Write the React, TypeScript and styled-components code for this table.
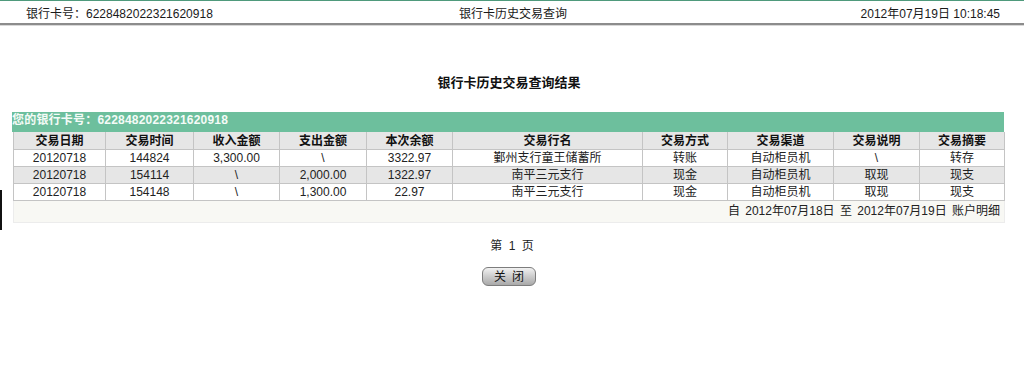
import React from "react";
import styled, { createGlobalStyle } from "styled-components";

const Global = createGlobalStyle`
  html, body { margin: 0; padding: 0; background: #fff; }
  body {
    font-family: "Liberation Sans", Arial, "Noto Sans CJK SC", sans-serif;
    font-size: 12px;
    color: #111;
  }
`;

const Page = styled.div`
  position: relative;
  width: 1024px;
  height: 375px;
  overflow: hidden;
  border-top: 1px solid #4f9a7c;
  box-sizing: border-box;
`;

const TopBar = styled.div`
  display: grid;
  grid-template-columns: 1fr auto 1fr;
  align-items: center;
  height: 22px;
  padding: 0 24px 0 26px;
  border-bottom: 2px solid #8c8c8c;
  box-shadow: 0 1px 0 #d8d8d8;
  font-size: 12px;
  color: #1a1a1a;
`;

const TopCell = styled.div<{ $align: "left" | "center" | "right" }>`
  text-align: ${(p) => p.$align};
  white-space: nowrap;
`;

const Title = styled.h1`
  margin: 48px 0 0;
  height: 20px;
  line-height: 20px;
  text-align: center;
  font-size: 13px;
  font-weight: bold;
  color: #111;
  padding-right: 6px;
`;

const TableWrap = styled.div`
  margin: 19px 20px 0 12px;
  width: 992px;
`;

const CardBar = styled.div`
  height: 20px;
  line-height: 16px;
  background: #6dbf9d;
  color: #f4fbf7;
  font-weight: bold;
  font-size: 12px;
  letter-spacing: 0.2px;
`;

const Table = styled.table`
  width: 991px;
  margin-left: 1px;
  border-collapse: collapse;
  table-layout: fixed;
  font-size: 12px;
`;

const HeadCell = styled.th`
  height: 17px;
  padding: 0;
  background: #e6e6e6;
  border: 1px solid #c4c4c4;
  border-top: none;
  font-weight: bold;
  text-align: center;
  color: #111;
  line-height: 14px;
`;

const Row = styled.tr<{ $alt: boolean }>`
  background: ${(p) => (p.$alt ? "#e6e6e6" : "#ffffff")};
`;

const Cell = styled.td`
  height: 16px;
  padding: 0;
  border: 1px solid #c4c4c4;
  text-align: center;
  color: #222;
  line-height: 14px;
  white-space: nowrap;
`;

const FooterCell = styled.td`
  height: 20px;
  padding: 0 4px 1px 0;
  background: #f8f8f4;
  text-align: right;
  color: #222;
  border: 1px solid #ececec;
  border-top: none;
  line-height: 14px;
  word-spacing: 2px;
`;

const Pager = styled.div`
  margin-top: 13px;
  text-align: center;
  color: #222;
  word-spacing: 3px;
`;

const ButtonRow = styled.div`
  display: flex;
  justify-content: center;
  margin-top: 14px;
  padding-right: 6px;
`;

const CloseButton = styled.button`
  width: 54px;
  height: 19px;
  padding: 0;
  border: 1px solid #7d7d7d;
  border-radius: 6px;
  background: linear-gradient(#f2f2f2 0%, #cfcfcf 45%, #a9a9a9 100%);
  font-family: "Liberation Sans", "Noto Sans CJK SC", sans-serif;
  font-size: 12px;
  color: #111;
  letter-spacing: 6px;
  text-indent: 6px;
  line-height: 16px;
`;

const EdgeMark = styled.div`
  position: absolute;
  left: 0;
  top: 189px;
  width: 2px;
  height: 40px;
  background: #111;
`;

const columns = [92, 88, 86, 87, 86, 190, 85, 106, 86, 85];
const headers = [
  "交易日期",
  "交易时间",
  "收入金额",
  "支出金额",
  "本次余额",
  "交易行名",
  "交易方式",
  "交易渠道",
  "交易说明",
  "交易摘要",
];

const rows = [
  ["20120718", "144824", "3,300.00", "\\", "3322.97", "鄞州支行童王储蓄所", "转账", "自动柜员机", "\\", "转存"],
  ["20120718", "154114", "\\", "2,000.00", "1322.97", "南平三元支行", "现金", "自动柜员机", "取现", "现支"],
  ["20120718", "154148", "\\", "1,300.00", "22.97", "南平三元支行", "现金", "自动柜员机", "取现", "现支"],
];

export default function App() {
  return (
    <Page>
      <Global />
      <TopBar>
        <TopCell $align="left">银行卡号：6228482022321620918</TopCell>
        <TopCell $align="center">银行卡历史交易查询</TopCell>
        <TopCell $align="right">2012年07月19日 10:18:45</TopCell>
      </TopBar>
      <Title>银行卡历史交易查询结果</Title>
      <TableWrap>
        <CardBar>您的银行卡号：6228482022321620918</CardBar>
        <Table>
          <colgroup>
            {columns.map((w, i) => (
              <col key={i} style={{ width: w }} />
            ))}
          </colgroup>
          <thead>
            <tr>
              {headers.map((h) => (
                <HeadCell key={h}>{h}</HeadCell>
              ))}
            </tr>
          </thead>
          <tbody>
            {rows.map((r, i) => (
              <Row key={i} $alt={i === 1}>
                {r.map((c, j) => (
                  <Cell key={j}>{c}</Cell>
                ))}
              </Row>
            ))}
            <tr>
              <FooterCell colSpan={10}>自 2012年07月18日 至 2012年07月19日 账户明细</FooterCell>
            </tr>
          </tbody>
        </Table>
      </TableWrap>
      <Pager>第 1 页</Pager>
      <ButtonRow>
        <CloseButton type="button">关闭</CloseButton>
      </ButtonRow>
      <EdgeMark />
    </Page>
  );
}
